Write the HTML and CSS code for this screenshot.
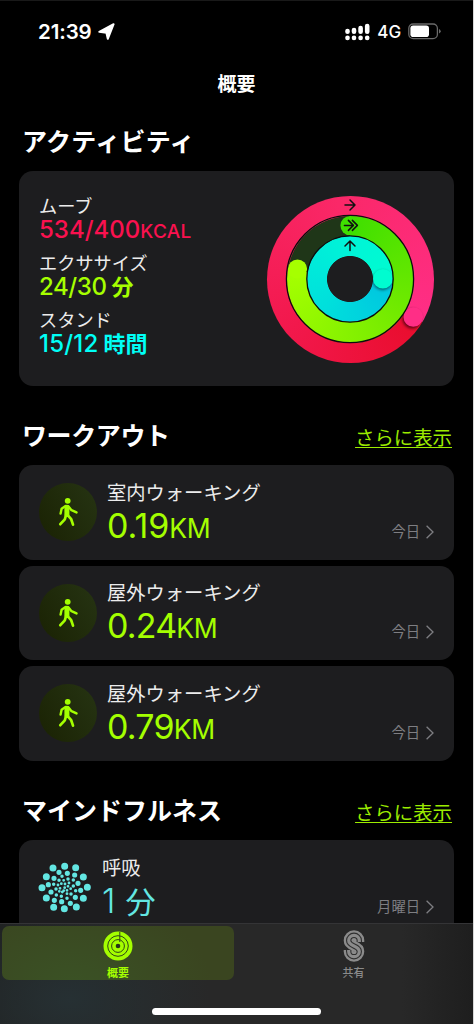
FILE: index.html
```html
<!DOCTYPE html>
<html lang="ja">
<head>
    <meta charset="UTF-8">
    <meta name="viewport" content="width=device-width, initial-scale=1.0">
    <title>概要</title>
    <link rel="stylesheet" href="styles.css">
</head>
<body>
    <!-- Shared icons -->
    <svg class="sprite" width="0" height="0">
        <symbol id="walk" viewBox="0 0 20 30">
            <circle cx="9.7" cy="3.8" r="2.9" fill="currentColor"/>
            <g fill="none" stroke="currentColor" stroke-linecap="round" stroke-linejoin="round">
                <path d="M8.9 10.2v7.4" stroke-width="5"/>
                <path d="M7.6 8.9 3.6 11.8 2.6 16.5M10.3 9.2l3.2 4 5 2.2" stroke-width="2.4"/>
                <path d="M8 18.2 6.8 22.3 2.3 27.2M9.4 17.8l3.8 4.4 1.8 5.4" stroke-width="2.7"/>
            </g>
        </symbol>
        <symbol id="chevron" viewBox="0 0 8 14">
            <path d="M.6.8l6.4 6.2-6.4 6.2" fill="none" stroke="currentColor" stroke-width="1.3"/>
        </symbol>
    </svg>

    <div class="app">
        <!-- Status bar -->
        <header class="status">
            <div class="status-left">
                <span class="time">21:39</span>
                <svg width="17" height="17" viewBox="0 0 17 17"><path d="M15.6 1.2 9.8 15.8 8.4 9.8 1.3 8.8z" fill="#fff" stroke="#fff" stroke-width="2" stroke-linejoin="round"/></svg>
            </div>
            <div class="status-right">
                <svg width="25" height="18" viewBox="0 0 25 18" fill="none" stroke="#fff" stroke-width="4.6" stroke-linecap="round">
                    <path d="M2.5 8v.8M9 7v1.8M15.6 5v3.8M22.2 3v5.8M2.5 14.8v.2M9 14.8v.2M15.6 14.8v.2M22.2 14.8v.2"/>
                </svg>
                <span class="network">4G</span>
                <svg width="33" height="17" viewBox="0 0 33 17">
                    <rect x=".8" y="1" width="28.6" height="14.6" rx="4.4" fill="none" stroke="#6a6a6a" stroke-width="1.3"/>
                    <rect x="2.4" y="2.6" width="18.6" height="11.4" rx="2.8" fill="#fff"/>
                    <path d="M31 6v4.6q1.7-.8 1.7-2.3T31 6z" fill="#6a6a6a"/>
                </svg>
            </div>
        </header>

        <h1 class="page-title">概要</h1>

        <main>
            <!-- Activity -->
            <div class="section-head"><h2 class="wide">アクティビティ</h2></div>
            <section class="card activity">
                <dl class="stats">
                    <dt>ムーブ</dt>
                    <dd class="move">534/400<small>KCAL</small></dd>
                    <dt>エクササイズ</dt>
                    <dd class="exercise">24/30<span class="unit">分</span></dd>
                    <dt>スタンド</dt>
                    <dd class="stand">15/12<span class="unit">時間</span></dd>
                </dl>
                <div class="rings">
                    <div class="ring ring-move"></div>
                    <div class="ring ring-exercise"></div>
                    <div class="ring ring-stand"></div>
                    <svg class="ring-caps" viewBox="-84 -84 168 168">
                        <defs>
                            <filter id="soft" x="-50%" y="-50%" width="200%" height="200%"><feGaussianBlur stdDeviation="1.6"/></filter>
                            <clipPath id="clipMove"><path clip-rule="evenodd" d="M-83.5 0a83.5 83.5 0 0 1 167 0a83.5 83.5 0 0 1-167 0zM-64 0a64 64 0 0 1 128 0a64 64 0 0 1-128 0z"/></clipPath>
                            <clipPath id="clipStand"><path clip-rule="evenodd" d="M-42.7 0a42.7 42.7 0 0 1 85.4 0a42.7 42.7 0 0 1-85.4 0zM-23 0a23 23 0 0 1 46 0a23 23 0 0 1-46 0z"/></clipPath>
                        </defs>
                        <g clip-path="url(#clipMove)">
                            <circle cx="62.2" cy="39.6" r="9.8" fill="#000" opacity=".6" filter="url(#soft)"/>
                            <circle cx="63.3" cy="38" r="9.8" fill="#ff2e86"/>
                        </g>
                        <g clip-path="url(#clipStand)">
                            <circle cx="32.6" cy="1.4" r="9.8" fill="#000" opacity=".5" filter="url(#soft)"/>
                            <circle cx="32.9" cy="-.3" r="9.8" fill="#00fcd0"/>
                        </g>
                        <circle cx="0" cy="-53.4" r="9.6" fill="#3fdf00"/>
                        <circle cx="-52.5" cy="-10" r="9.6" fill="#a6ff00"/>
                        <g fill="none" stroke="#0c0c0e" stroke-width="1.3">
                            <circle r="63.6"/>
                            <circle r="43.2"/>
                        </g>
                        <g fill="none" stroke="#111" stroke-width="1.5" stroke-linecap="round" stroke-linejoin="round">
                            <path d="M-5-74H5M0-79l5 5-5 5"/>
                            <path d="M-5.6-53.6H2.6M-1.6-58.6l5 5-5 5M2.4-58.6l5 5-5 5"/>
                            <path d="M0-28.4v-9.2M-5-33l5-5 5 5"/>
                        </g>
                    </svg>
                </div>
            </section>

            <!-- Workouts -->
            <div class="section-head spaced">
                <h2 class="narrow">ワークアウト</h2>
                <a href="#workouts">さらに表示</a>
            </div>
            <section class="workouts" id="workouts">
                <div class="card row">
                    <div class="badge"><svg width="20" height="30"><use href="#walk"/></svg></div>
                    <div class="info">
                        <p class="label">室内ウォーキング</p>
                        <p class="value loose">0.19<small>KM</small></p>
                    </div>
                    <div class="when">今日<svg width="8" height="14"><use href="#chevron"/></svg></div>
                </div>
                <div class="card row">
                    <div class="badge"><svg width="20" height="30"><use href="#walk"/></svg></div>
                    <div class="info">
                        <p class="label">屋外ウォーキング</p>
                        <p class="value">0.24<small>KM</small></p>
                    </div>
                    <div class="when">今日<svg width="8" height="14"><use href="#chevron"/></svg></div>
                </div>
                <div class="card row">
                    <div class="badge"><svg width="20" height="30"><use href="#walk"/></svg></div>
                    <div class="info">
                        <p class="label">屋外ウォーキング</p>
                        <p class="value">0.79<small>KM</small></p>
                    </div>
                    <div class="when">今日<svg width="8" height="14"><use href="#chevron"/></svg></div>
                </div>
            </section>

            <!-- Mindfulness -->
            <div class="section-head spaced">
                <h2>マインドフルネス</h2>
                <a href="#mindfulness">さらに表示</a>
            </div>
            <section class="card row mind" id="mindfulness">
                <svg class="dots" width="53" height="53" viewBox="70 213 159 159">
                    <path stroke-width="21" d="M150 229h0M183 233h0M206 261h0M218 292h0M206 325h0M185 351h0M149 356h0M117 352h0M95 324h0M82 293h0M95 260h0M115 234h0"/>
                    <path stroke-width="15.5" d="M133 247h0M158 250h0M180 255h0M190 280h0M198 301h0M182 322h0M167 340h0M141 335h0M119 331h0M109 306h0M101 284h0M118 265h0"/>
                    <path stroke-width="10.5" d="M142 259h0M160 267h0M176 270h0M176 288h0M183 302h0M169 312h0M157 325h0M140 319h0M125 315h0M124 297h0M117 283h0M133 271h0"/>
                    <path stroke-width="8.5" d="M147 271h0M163 279h0M168 296h0M157 311h0M143 306h0M134 304h0M136 295h0M130 285h0M140 281h0M151 282h0M160 289h0M150 293h0M157 301h0M147 302h0"/>
                </svg>
                <div class="info">
                    <p class="label">呼吸</p>
                    <p class="value">1<span class="unit">分</span></p>
                </div>
                <div class="when">月曜日<svg width="8" height="14"><use href="#chevron"/></svg></div>
            </section>
        </main>

        <!-- Tab bar -->
        <nav class="tabbar">
            <div class="tabs">
                <a class="tab active" href="#summary">
                    <svg width="30" height="32" viewBox="-15 -16 30 32">
                        <circle r="14.5" fill="#a4ff00"/>
                        <g fill="none" stroke="#2f4518" stroke-width="1">
                            <circle r="10.3"/>
                            <circle r="6.4"/>
                            <path d="M1.8-14v10"/>
                        </g>
                        <circle r="2.3" fill="#26331a"/>
                    </svg>
                    <span>概要</span>
                </a>
                <a class="tab" href="#share">
                    <svg width="22" height="32" viewBox="0 0 22 32" fill="none">
                        <path d="M16.3 12V10.6A5.3 5.3 0 0 0 5.7 10.6C5.7 17 16.3 14.8 16.3 21.4A5.3 5.3 0 0 1 5.7 21.4V20" stroke="#8b8b8b" stroke-width="10"/>
                        <path d="M16.3 12V10.6A5.3 5.3 0 0 0 5.7 10.6C5.7 17 16.3 14.8 16.3 21.4A5.3 5.3 0 0 1 5.7 21.4V20" stroke="#303030" stroke-width="5.4"/>
                        <path d="M16.3 12V10.6A5.3 5.3 0 0 0 5.7 10.6C5.7 17 16.3 14.8 16.3 21.4A5.3 5.3 0 0 1 5.7 21.4V20" stroke="#8b8b8b" stroke-width="3.2"/>
                    </svg>
                    <span>共有</span>
                </a>
            </div>
            <div class="home-indicator"></div>
        </nav>
    </div>
</body>
</html>
```
FILE: styles.css
```css
* {
    margin: 0;
    padding: 0;
    box-sizing: border-box;
}

body {
    background: #d8d8d8;
    font-family: Inter, 'Noto Sans CJK JP', sans-serif;
    color: #fff;
    overflow: hidden;
}

svg {
    display: block;
    flex: none;
}

a {
    color: inherit;
}

.sprite {
    position: absolute;
}

.app {
    width: 473px;
    height: 1024px;
    background: #000;
    border-top: 1px solid #191919;
    display: flex;
    flex-direction: column;
    overflow: hidden;
}

/* Status bar */
.status {
    height: 61px;
    flex: none;
    padding: 0 32px 0 38px;
    display: flex;
    justify-content: space-between;
    align-items: center;
}

.status-left,
.status-right {
    display: flex;
    align-items: center;
}

.status-left {
    gap: 6px;
}

.status-right {
    gap: 7px;
}

.time {
    font-size: 20.5px;
    font-weight: 600;
    letter-spacing: -0.1px;
}

.network {
    font-size: 17px;
    font-weight: 500;
    letter-spacing: -0.1px;
}

.page-title {
    height: 45px;
    flex: none;
    line-height: 46px;
    font-size: 19px;
    font-weight: 700;
    text-align: center;
}

main {
    flex: 1;
    min-height: 0;
    overflow: hidden;
    padding: 15px 19px 0;
}

/* Sections */
.section-head {
    height: 49px;
    padding: 0 2px 0 3px;
    display: flex;
    justify-content: space-between;
    align-items: flex-start;
}

.section-head h2 {
    font-size: 25px;
    font-weight: 700;
    line-height: 40px;
}

.section-head .wide {
    letter-spacing: 0.3px;
}

.section-head .narrow {
    letter-spacing: -0.4px;
}

.section-head a {
    font-size: 19.4px;
    line-height: 44px;
    color: #9cec00;
    text-underline-offset: 2px;
}

.spaced {
    margin-top: 30px;
}

.card {
    background: #1d1d1f;
    border-radius: 14px;
}

/* Activity */
.activity {
    height: 215px;
    padding: 24px 20px 0 20px;
    display: flex;
    justify-content: space-between;
}

.stats dt {
    font-size: 18.2px;
    line-height: 23px;
    color: #ececec;
}

.stats dd {
    font-size: 24px;
    font-weight: 500;
    line-height: 24px;
    height: 24px;
    margin-bottom: 10px;
    white-space: nowrap;
}

.stats small {
    font-size: 19px;
    letter-spacing: 0.3px;
}

.stats .unit {
    font-size: 22px;
    font-weight: 700;
    letter-spacing: 0;
    margin-left: 5px;
}

.move {
    color: #fa114f;
}

.exercise {
    color: #a6ff00;
    letter-spacing: -0.4px;
}

.stand {
    color: #00fff6;
    letter-spacing: 0.2px;
}

.rings {
    display: grid;
    width: 168px;
    height: 168px;
}

.ring,
.ring-caps {
    grid-area: 1 / 1;
    place-self: center;
    border-radius: 50%;
}

.ring-caps {
    width: 168px;
    height: 168px;
}

.ring-move {
    width: 167px;
    height: 167px;
    background: conic-gradient(from 121deg, #e90d2d, #f2184c 110deg, #fa2868 230deg, #ff2e86 360deg);
}

.ring-exercise {
    width: 127px;
    height: 127px;
    background: conic-gradient(#3fdf00, #78ec00 140deg, #a6ff00 280deg, #1f3618 280deg);
}

.ring-stand {
    width: 86px;
    height: 86px;
    background: radial-gradient(circle, #1d1d1f 22.6px, transparent 23.4px),
        conic-gradient(from 90deg, #00c4e0, #00dfdc 130deg, #00f4d8 270deg, #00fcd0);
}

/* Workouts */
.workouts {
    display: grid;
    gap: 6px;
}

.row {
    height: 94.7px;
    padding: 0 20px;
    display: flex;
}

.badge {
    width: 58px;
    height: 58px;
    margin: 18px 10px 0 0;
    border-radius: 50%;
    background: linear-gradient(60deg, #1a2203, #263413);
    color: #a4ff00;
    display: flex;
    justify-content: center;
    align-items: center;
}

.info {
    flex: 1;
    padding-top: 13.5px;
}

.label {
    font-size: 19.3px;
    line-height: 28px;
    color: #ececec;
}

.value {
    font-size: 34px;
    line-height: 38px;
    letter-spacing: -0.8px;
    color: #a4ff00;
}

.value.loose {
    letter-spacing: 0;
}

.value small {
    font-size: 26.5px;
    letter-spacing: -0.3px;
}

.when {
    align-self: flex-end;
    padding-bottom: 17px;
    font-size: 14.3px;
    line-height: 22px;
    color: #7e7e82;
    display: flex;
    align-items: center;
    gap: 6px;
}

/* Mindfulness */
.mind {
    height: 120px;
}

.mind .dots {
    margin: 21px 11px 0 -1px;
    fill: none;
    stroke: #63e6e2;
    stroke-linecap: round;
}

.mind .value {
    font-weight: 300;
    color: #63e6e2;
}

.mind .unit {
    font-size: 30px;
    font-weight: 400;
    margin-left: 11px;
}

.mind .when {
    align-self: flex-start;
    padding: 56px 0 0;
}

/* Tab bar */
.tabbar {
    height: 101px;
    flex: none;
    padding-top: 2px;
    border-top: 1px solid #343436;
    background: radial-gradient(ellipse 140px 90px at 70px 75px, #263033, transparent),
        linear-gradient(90deg, #202222, #282828 30%, #282828 85%, #1e1e1e);
}

.tabs {
    height: 54px;
    padding: 0 0 0 2px;
    display: grid;
    grid-template-columns: 232px 1fr;
    grid-template-rows: 54px;
}

.tab {
    display: flex;
    flex-direction: column;
    align-items: center;
    padding-top: 4px;
    border-radius: 7px;
    font-size: 11px;
    font-weight: 500;
    line-height: 14px;
    color: #8b8b8b;
    text-decoration: none;
}

.tab span {
    margin-top: 4px;
}

.tab.active {
    color: #a4ff00;
    font-weight: 700;
    background: radial-gradient(ellipse 140px 90px at 70px 60px, #3a5225, transparent), #3a4520;
}

.home-indicator {
    width: 169px;
    height: 7px;
    margin: 28px auto 0;
    border-radius: 4px;
    background: #fff;
}
```
